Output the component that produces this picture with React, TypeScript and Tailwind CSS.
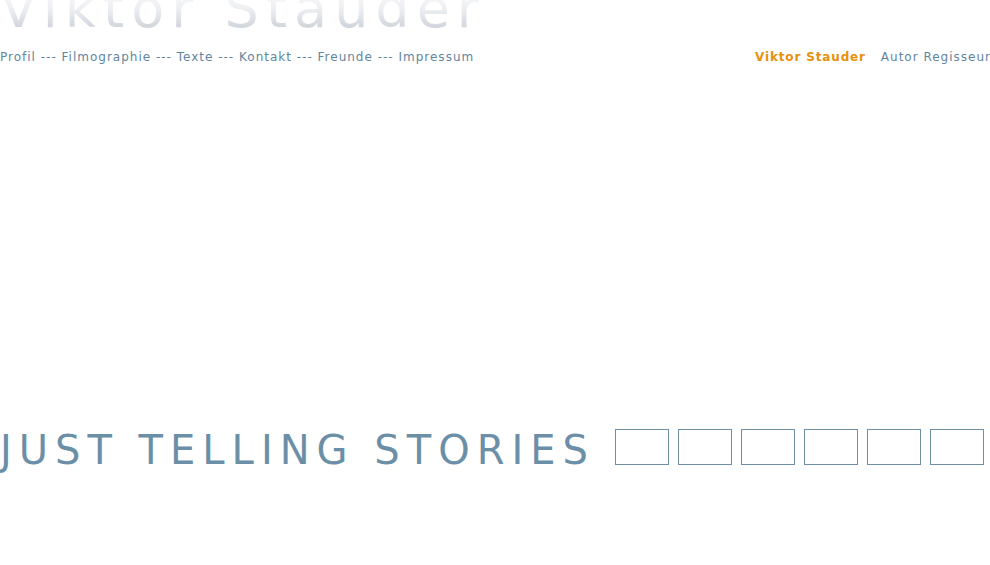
export default function App() {
  const boxes = [0, 1, 2, 3, 4, 5];
  return (
    <div className="w-[990px] h-[565px] bg-white overflow-hidden font-['DejaVu_Sans',Verdana,sans-serif]">
      {/* Header */}
      <h1 className="-mt-[18px] text-[54px] leading-none tracking-[7px] font-normal whitespace-nowrap bg-gradient-to-b from-[#ffffff] via-[#eceef1] to-[#c3cad3] bg-clip-text text-transparent w-max">
        Viktor Stauder
      </h1>
      <div className="flex items-center justify-between mt-[13px] text-[12px] leading-[16px] tracking-[1px] text-[#5f85a0]">
        <nav className="whitespace-nowrap">
          Profil --- Filmographie --- Texte --- Kontakt --- Freunde --- Impressum
        </nav>
        <div className="flex items-center gap-[15px] whitespace-nowrap -mr-[1px]">
          <span className="font-bold text-[#e8900c] tracking-[0.85px]">Viktor Stauder</span>
          <span>Autor Regisseur</span>
        </div>
      </div>

      {/* Tagline */}
      <div className="flex items-start mt-[364px]">
        <h2 className="mt-[1px] text-[40px] leading-none tracking-[7px] text-[#6c8fa8] whitespace-nowrap">
          JUST TELLING STORIES
        </h2>
        <div className="flex gap-[9px] ml-[20px]">
          {boxes.map((b) => (
            <div key={b} className="w-[54px] h-[36px] border border-[#6e8fa4]" />
          ))}
        </div>
      </div>
    </div>
  );
}
